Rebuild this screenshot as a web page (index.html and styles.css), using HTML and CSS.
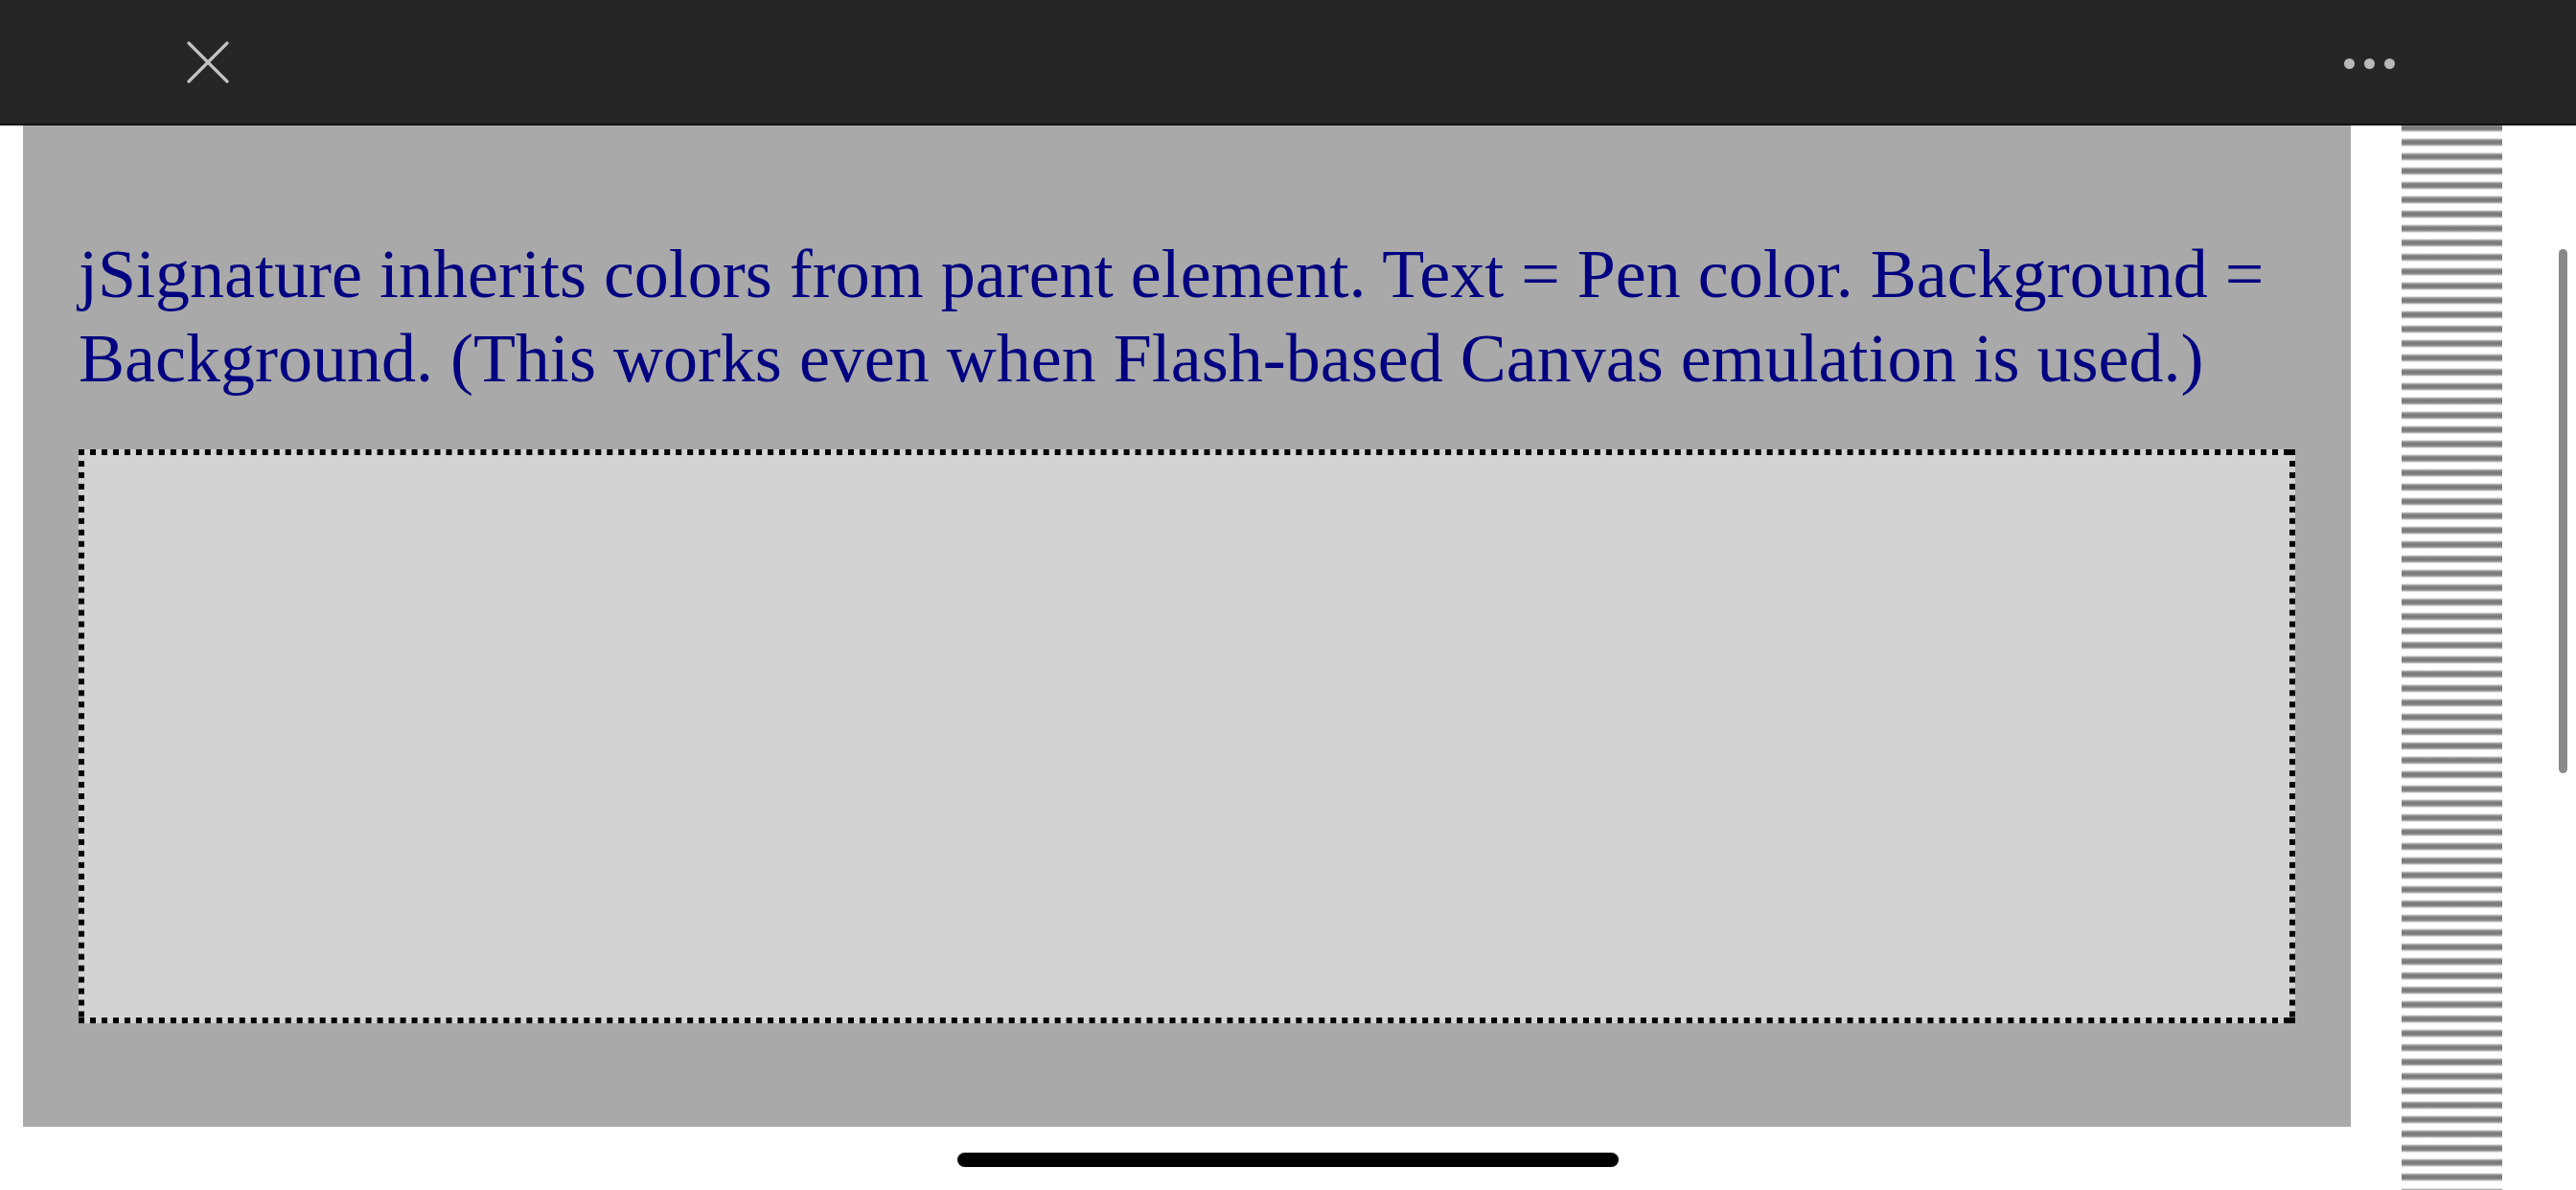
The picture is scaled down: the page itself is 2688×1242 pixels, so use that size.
FILE: index.html
```html
<!DOCTYPE html>
<html lang="en">
<head>
<meta charset="utf-8">
<title>jSignature</title>
<link rel="stylesheet" href="styles.css">
</head>
<body>
  <header class="topbar">
    <button class="icon-btn close" aria-label="Close">
      <svg viewBox="0 0 44 44" width="44" height="44">
        <path d="M2 2 L42 42 M42 2 L2 42" stroke="#c2c2c2" stroke-width="3.2" stroke-linecap="round" fill="none"/>
      </svg>
    </button>
    <button class="icon-btn more" aria-label="More">
      <span class="dot"></span><span class="dot"></span><span class="dot"></span>
    </button>
  </header>
  <div class="page">
    <section class="panel">
      <p class="note">jSignature inherits colors from parent element. Text = Pen color. Background = Background. (This works even when Flash-based Canvas emulation is used.)</p>
      <div class="sig-pad"></div>
    </section>
    <div class="ruler"></div>
  </div>
  <div class="scrollbar"></div>
  <div class="home-indicator"></div>
</body>
</html>
```

FILE: styles.css
```css
html, body {
  margin: 0;
  padding: 0;
}

body {
  width: 2688px;
  height: 1242px;
  overflow: hidden;
  background: #ffffff;
  font-family: "Liberation Serif", "Times New Roman", serif;
}

.topbar {
  height: 129px;
  border-bottom: 2px solid #121212;
  background: #262626;
  display: flex;
  align-items: center;
  justify-content: space-between;
  padding: 0 189px 0 195px;
}

.icon-btn {
  border: 0;
  background: transparent;
  padding: 0;
  margin: 0;
  display: flex;
  align-items: center;
}

.close svg {
  display: block;
}

.more {
  gap: 10px;
  margin-top: 3px;
}

.dot {
  width: 11px;
  height: 11px;
  border-radius: 50%;
  background: #b9b9b9;
}

.page {
  display: flex;
  height: 1111px;
}

.panel {
  margin-left: 24px;
  width: 2429px;
  height: 1045px;
  box-sizing: border-box;
  padding: 111px 58px 0;
  background: #a9a9a9;
  color: #000080;
}

.note {
  margin: 0 0 51px;
  font-size: 72px;
  line-height: 88px;
}

.sig-pad {
  height: 599px;
  background:
    linear-gradient(#000, #000) right bottom / 6px 6px no-repeat,
    linear-gradient(#000, #000) right top / 6px 6px no-repeat,
    linear-gradient(90deg, #000 50%, transparent 50%) left top / 12px 6px round no-repeat,
    linear-gradient(90deg, #000 50%, transparent 50%) left bottom / 12px 6px round no-repeat,
    linear-gradient(180deg, #000 50%, transparent 50%) left top / 6px 12px no-repeat round,
    linear-gradient(180deg, #000 50%, transparent 50%) right top / 6px 12px no-repeat round,
    #d3d3d3;
}

.ruler {
  margin-left: 53px;
  width: 105px;
  height: 100%;
  background: repeating-linear-gradient(180deg,
    #ffffff 0px,
    #ffffff 3px,
    #c4c4c4 4px,
    #8a8a8a 5.5px,
    #777777 7.5px,
    #8a8a8a 9.5px,
    #c4c4c4 11px,
    #ffffff 12px,
    #ffffff 15px);
  background-position: 0 -5px;
}

.scrollbar {
  position: fixed;
  left: 2670px;
  top: 260px;
  width: 9px;
  height: 547px;
  border-radius: 5px;
  background: #8a8a8a;
}

.home-indicator {
  position: fixed;
  left: 999px;
  top: 1203px;
  width: 690px;
  height: 15px;
  border-radius: 8px;
  background: #000000;
}
```
